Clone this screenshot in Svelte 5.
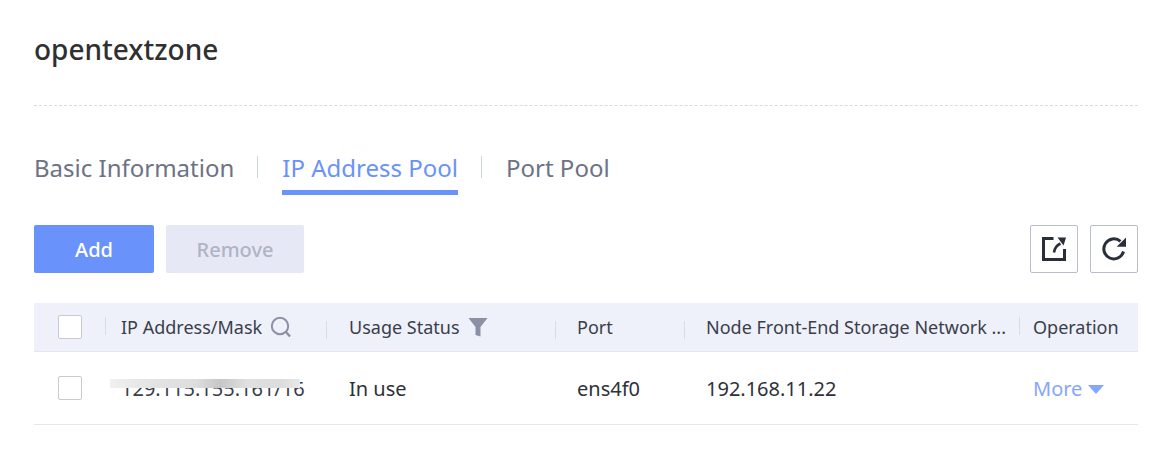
<script lang="ts">
  const tabs = ['Basic Information', 'IP Address Pool', 'Port Pool'];
  const activeTab = 'IP Address Pool';
</script>

<div class="page">
  <h1 class="title">opentextzone</h1>

  <nav class="tabs">
    {#each tabs as tab, i}
      {#if i > 0}<span class="tab-sep"></span>{/if}
      <span class="tab" class:active={tab === activeTab}>{tab}</span>
    {/each}
  </nav>

  <div class="toolbar">
    <button class="btn primary">Add</button>
    <button class="btn disabled">Remove</button>
    <div class="tools">
      <button class="icon-btn" aria-label="Export">
        <svg width="24" height="24" viewBox="0 0 24 24" fill="none" stroke="#2a2e3a" stroke-width="3">
          <path d="M11.5 1.5H1.5V22.5H22.5V12" />
          <path d="M12 15.5C12.5 11 14.500 8.500 18.500 6.500" stroke-width="2.600" />
          <path d="M15.500 0.500L24 0.500L21.500 8.500Z" fill="#2a2e3a" stroke="none" />
        </svg>
      </button>
      <button class="icon-btn" aria-label="Refresh">
        <svg width="24" height="24" viewBox="0 0 24 24" fill="none" stroke="#2a2e3a" stroke-width="3">
          <path d="M21.500 14.500A10 10 0 1 1 18.500 4.400" />
          <path d="M24 0.500V9.800H14.700Z" fill="#2a2e3a" stroke="none" />
        </svg>
      </button>
    </div>
  </div>

  <div class="table">
    <div class="row head">
      <div class="cell c0 first-col"><span class="check"></span></div>
      <div class="cell c1 rule first-col">
        IP Address/Mask
        <svg class="cell-icon" width="22" height="22" viewBox="0 0 22 22" fill="none" stroke="#8b90a4" stroke-width="2">
          <circle cx="10" cy="10" r="8.200" />
          <path d="M16 16L20 20.500" stroke-width="2.400" />
        </svg>
      </div>
      <div class="cell c2 rule">
        Usage Status
        <svg class="cell-icon" width="20" height="20" viewBox="0 0 20 20" fill="#8b90a4">
          <path d="M0.500 1H19.500L12.500 10V19.500L7.500 18V10Z" />
        </svg>
      </div>
      <div class="cell c3 rule">Port</div>
      <div class="cell c4 rule">Node Front-End Storage Network ...</div>
      <div class="cell c5 rule first-col">Operation</div>
    </div>

    <div class="row body">
      <div class="cell c0"><span class="check"></span></div>
      <div class="cell c1 ip">
        129.115.155.161/16
        <span class="smudge"></span>
      </div>
      <div class="cell c2">In use</div>
      <div class="cell c3">ens4f0</div>
      <div class="cell c4">192.168.11.22</div>
      <div class="cell c5 more">More <span class="caret"></span></div>
    </div>
  </div>
</div>

<style>
  :global(body) {
    background: #fff;
  }

  .page {
    width: 1170px;
    height: 464px;
    box-sizing: border-box;
    padding: 29px 32px 0 34px;
    font-family: 'Noto Sans', sans-serif;
    color: #2e3138;
    overflow: hidden;
  }

  .title {
    margin: 0;
    height: 76px;
    line-height: 41px;
    font-size: 28px;
    font-weight: 500;
    color: #303030;
    border-bottom: 1px dashed #d9dbe6;
  }

  .tabs {
    display: flex;
    align-items: center;
    height: 48px;
    margin-top: 37px;
    font-size: 24px;
    line-height: 48px;
    color: #6d7285;
  }

  .tab {
    position: relative;
    height: 48px;
    margin-top: 8px;
    line-height: 42px;
  }

  .tab.active {
    color: #6a92fb;
  }

  .tab.active::after {
    content: '';
    position: absolute;
    left: 0;
    right: 0;
    bottom: 0;
    height: 5px;
    background: #6a92fb;
  }

  .tab-sep {
    width: 1px;
    height: 22px;
    margin: 0 24px 0 23px;
    background: #ccd2e6;
  }

  .toolbar {
    display: flex;
    gap: 12px;
    margin-top: 34px;
  }

  .btn {
    height: 48px;
    padding: 0;
    border: 0;
    border-radius: 2px;
    font: 500 20px 'Noto Sans', sans-serif;
  }

  .btn.primary {
    width: 120px;
    background: #6a92fb;
    color: #fff;
  }

  .btn.disabled {
    width: 138px;
    background: #e6e9f5;
    color: #afb4c6;
  }

  .tools {
    display: flex;
    gap: 12px;
    margin-left: auto;
  }

  .icon-btn {
    display: flex;
    align-items: center;
    justify-content: center;
    width: 48px;
    height: 48px;
    padding: 0;
    background: #fff;
    border: 1px solid #b9bdd2;
    border-radius: 2px;
  }

  .table {
    margin-top: 30px;
    font-size: 18px;
  }

  .row {
    display: grid;
    grid-template-columns: 71px 221px 229px 129px 335px 119px;
    align-items: center;
  }

  .row.head {
    height: 48px;
    background: #eef1fa;
    border-bottom: 1px solid #e4e7f2;
    color: #3a3e4a;
  }

  .row.body {
    height: 72px;
    border-bottom: 1px solid #e4e7f2;
    font-size: 20px;
  }

  .cell {
    position: relative;
    display: flex;
    align-items: center;
    white-space: nowrap;
  }

  .c0 { padding-left: 24px; }
  .c1 { padding-left: 16px; }
  .c2 { padding-left: 23px; }
  .c3 { padding-left: 22px; }
  .c4 { padding-left: 22px; }
  .c5 { padding-left: 14px; }

  .rule::before {
    content: '';
    position: absolute;
    left: 0;
    top: 50%;
    width: 1px;
    height: 18px;
    margin-top: -6px;
    background: #d8dbe8;
  }

  .rule.first-col::before {
    margin-top: -10px;
  }

  .cell-icon {
    margin-left: 8px;
    flex: none;
  }

  .check {
    display: block;
    box-sizing: border-box;
    width: 24px;
    height: 24px;
    background: #fff;
    border: 1px solid #c9c9cf;
    border-radius: 2px;
  }

  .ip {
    color: #3a3e4a;
  }

  .smudge {
    position: absolute;
    left: 5px;
    top: 4px;
    width: 190px;
    height: 9px;
    background: linear-gradient(90deg, #f0f0f0 0%, #e2e2e2 25%, #dedede 45%, #c6c6c6 58%, #e0e0e0 72%, #dcdcdc 90%, #e8e8e8 100%);
    filter: blur(0.6px);
  }

  .more {
    color: #86a6fd;
    gap: 6px;
  }

  .caret {
    width: 0;
    height: 0;
    margin-top: 3px;
    border-left: 8px solid transparent;
    border-right: 8px solid transparent;
    border-top: 9px solid #86a6fd;
  }
</style>
